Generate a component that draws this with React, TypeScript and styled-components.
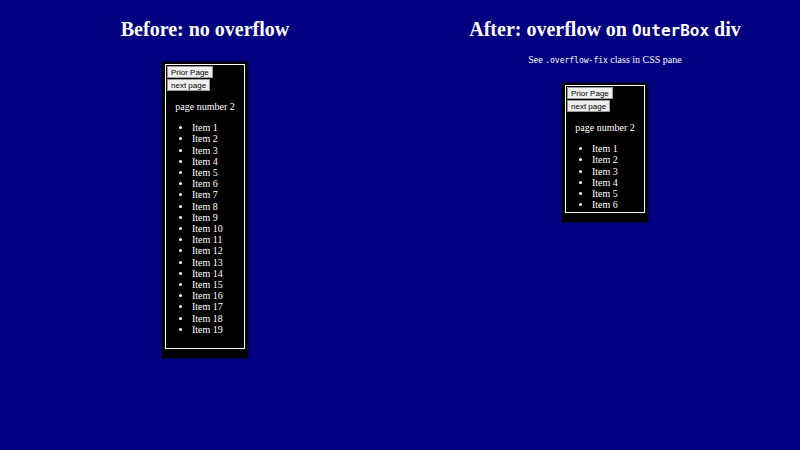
import React from "react";
import styled, { createGlobalStyle } from "styled-components";

const GlobalStyle = createGlobalStyle`
  html, body {
    margin: 0;
    padding: 0;
    background: #000080;
  }
  body {
    font-family: "Liberation Serif", "Times New Roman", serif;
    font-size: 10px;
    color: #ffffff;
  }
`;

const Page = styled.div`
  display: flex;
  gap: 10px;
  padding-left: 10px;
  min-height: 450px;
  box-sizing: border-box;
`;

const Column = styled.section`
  width: 390px;
  display: flex;
  flex-direction: column;
  align-items: center;
`;

const Title = styled.h1`
  margin: 18px 0 0;
  font-size: 20px;
  line-height: 23px;
  font-weight: bold;
  color: #ffffff;
  text-align: center;
  white-space: nowrap;
`;

const Code = styled.code<{ $size: number }>`
  font-family: "DejaVu Sans Mono", "Liberation Mono", monospace;
  font-size: ${(p) => p.$size}px;
`;

const Note = styled.p`
  margin: 12px 0 0;
  font-size: 10px;
  line-height: 12px;
  color: #ffffff;
`;

const OuterBox = styled.div<{ $top: number }>`
  margin-top: ${(p) => p.$top}px;
  width: 86px;
  box-sizing: border-box;
  padding: 2px 3px 9px 3px;
  background: #000000;
  box-shadow: 0 0 2px #000000;
`;

const InnerBox = styled.div<{ $height?: number }>`
  box-sizing: border-box;
  width: 80px;
  border: 1px solid #ffffff;
  padding: 1px 1px 2px;
  background: #000000;
  ${(p) => (p.$height ? `height: ${p.$height}px; overflow: hidden;` : "")}
`;

const Pager = styled.div`
  display: flex;
  flex-direction: column;
  align-items: flex-start;
  gap: 1px;
`;

const PagerButton = styled.button`
  font-family: "Liberation Sans", Arial, sans-serif;
  font-size: 8px;
  line-height: 9px;
  padding: 1px 3px 0;
  margin: 0;
  color: #000000;
  background: #efefef;
  border: 1px solid #9a9a9a;
  border-radius: 0;
`;

const PageLabel = styled.p`
  margin: 10px 0;
  text-align: center;
  font-size: 10px;
  line-height: 11.2px;
`;

const ItemList = styled.ul`
  margin: 10px 0 11px;
  padding-left: 25px;
  font-size: 10px;
  line-height: 11.2px;
  list-style: disc;
`;

function Paginated({ count, height }: { count: number; height?: number }) {
  const items = Array.from({ length: count }, (_, i) => `Item ${i + 1}`);
  return (
    <InnerBox $height={height}>
      <Pager>
        <PagerButton>Prior Page</PagerButton>
        <PagerButton>next page</PagerButton>
      </Pager>
      <PageLabel>page number 2</PageLabel>
      <ItemList>
        {items.map((it) => (
          <li key={it}>{it}</li>
        ))}
      </ItemList>
    </InnerBox>
  );
}

export default function App() {
  return (
    <>
      <GlobalStyle />
      <Page>
        <Column>
          <Title>Before: no overflow</Title>
          <OuterBox $top={21}>
            <Paginated count={19} />
          </OuterBox>
        </Column>
        <Column>
          <Title>
            After: overflow on <Code $size={16}>OuterBox</Code> div
          </Title>
          <Note>
            See <Code $size={8}>.overflow-fix</Code> class in CSS pane
          </Note>
          <OuterBox $top={16}>
            <Paginated count={6} height={128} />
          </OuterBox>
        </Column>
      </Page>
    </>
  );
}
